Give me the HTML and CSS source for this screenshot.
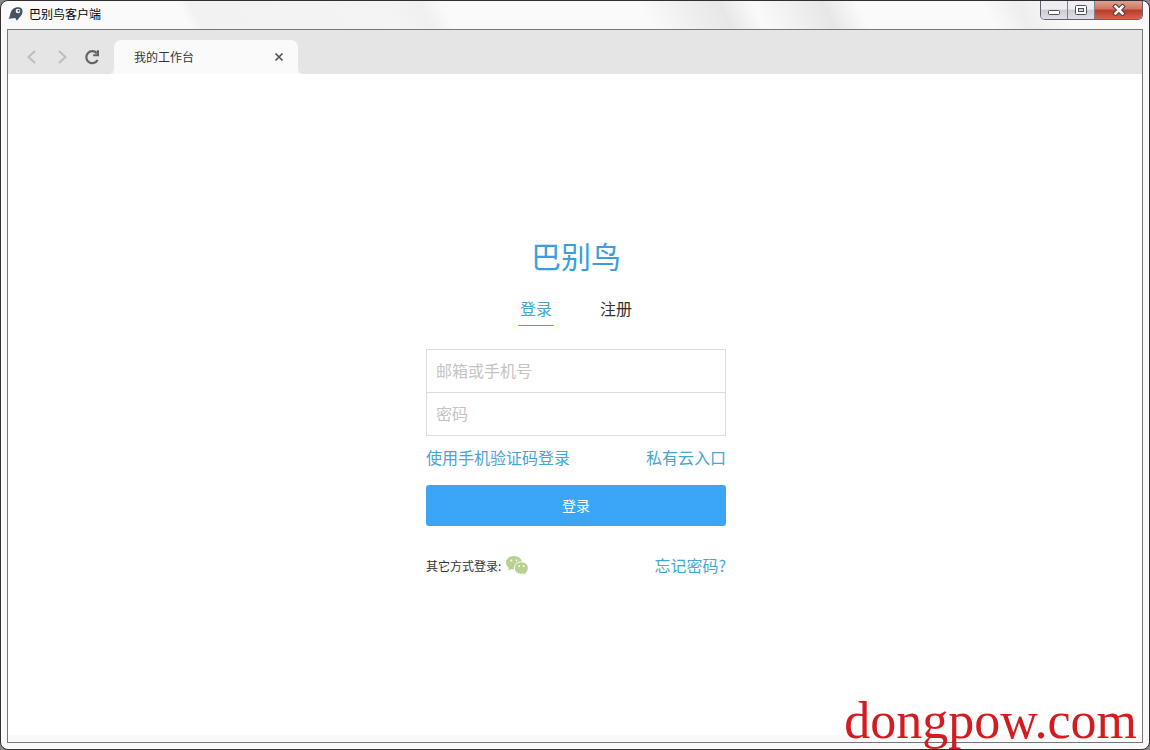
FILE: index.html
```html
<!DOCTYPE html>
<html lang="zh-CN">
<head>
<meta charset="utf-8">
<title>巴别鸟客户端</title>
<link rel="stylesheet" href="styles.css">
</head>
<body>
<div class="window">
  <header class="titlebar">
    <svg class="app-icon" width="16" height="16" viewBox="0 0 16 16" aria-hidden="true">
      <path d="M0.500 12.800C2.500 10 1.800 5.500 5 3 7.500 1 12.500 0.600 14 3.200 15.200 5.500 14.300 8.200 12.500 10.300L8.800 14.800 7.300 12Z" fill="#46525f"/>
      <circle cx="10" cy="5" r="2.300" fill="#fff"/><circle cx="10.500" cy="4.800" r="1.100" fill="#46525f"/>
    </svg>
    <h1 class="window-title">巴别鸟客户端</h1>
    <div class="controls">
      <button class="control" type="button" aria-label="最小化">
        <svg width="14" height="12" viewBox="0 0 14 12"><rect x="1.500" y="6.500" width="11" height="4" rx="1" fill="#fff" stroke="#4d4f5c"/></svg>
      </button>
      <button class="control" type="button" aria-label="最大化">
        <svg width="14" height="12" viewBox="0 0 14 12"><rect x="1.500" y="1.500" width="11" height="9" rx="1" fill="#fff" stroke="#4d4f5c"/><rect x="4.500" y="4.500" width="5" height="3" fill="#d5d6de" stroke="#4d4f5c"/></svg>
      </button>
      <button class="control control-close" type="button" aria-label="关闭">
        <svg width="14" height="12" viewBox="0 0 14 12"><path d="M3.500 2.500l7 7M10.500 2.500l-7 7" stroke="#5e3b40" stroke-width="4.600" stroke-linecap="square"/><path d="M3.500 2.500l7 7M10.500 2.500l-7 7" stroke="#fff" stroke-width="2.600" stroke-linecap="square"/></svg>
      </button>
    </div>
  </header>
  <div class="frame">
    <nav class="tabbar">
      <button class="nav-button" type="button" aria-label="后退">
        <svg width="16" height="16" viewBox="0 0 16 16"><path d="M11 2L4.500 8l6.500 6" fill="none" stroke="#bdbdbd" stroke-width="2"/></svg>
      </button>
      <button class="nav-button" type="button" aria-label="前进">
        <svg width="16" height="16" viewBox="0 0 16 16"><path d="M5 2l6.500 6L5 14" fill="none" stroke="#bdbdbd" stroke-width="2"/></svg>
      </button>
      <button class="nav-button" type="button" aria-label="刷新">
        <svg width="16" height="16" viewBox="0 0 16 16"><path d="M13.600 11A6 6 0 1 1 12.800 4.200" fill="none" stroke="#636363" stroke-width="2.200"/><path d="M15 1.200v6H9.200V5.300h3.600V1.200z" fill="#636363"/></svg>
      </button>
      <div class="page-tab">
        <span class="page-tab-title">我的工作台</span>
        <button class="tab-close" type="button" aria-label="关闭标签页">
          <svg width="10" height="10" viewBox="0 0 10 10"><path d="M1.500 1.500l7 7M8.500 1.500l-7 7" stroke="#555" stroke-width="1.700"/></svg>
        </button>
      </div>
    </nav>
    <main class="page">
      <form class="login">
        <h2 class="brand">巴别鸟</h2>
        <div class="modes">
          <a class="mode mode-active" href="#login">登录</a>
          <a class="mode" href="#register">注册</a>
        </div>
        <div class="fields">
          <input class="field" type="text" placeholder="邮箱或手机号" aria-label="邮箱或手机号">
          <input class="field" type="password" placeholder="密码" aria-label="密码">
        </div>
        <div class="links">
          <a class="link" href="#code">使用手机验证码登录</a>
          <a class="link" href="#private">私有云入口</a>
        </div>
        <button class="submit" type="submit">登录</button>
        <div class="others">
          <span class="others-label">其它方式登录:</span>
          <a class="wechat" href="#wechat" aria-label="微信登录">
            <svg width="24" height="24" viewBox="0 0 24 24">
              <path d="M9 2C4.500 2 1 4.900 1 8.700c0 2.100 1.100 3.900 2.900 5.100L3 16.500l3.300-1.600c.9.300 1.800.4 2.700.4 4.500 0 8-2.900 8-6.600S13.500 2 9 2z" fill="#b6d190"/>
              <path d="M16.500 7.900c-4 0-7.100 2.700-7.100 6.100s3.100 6.200 7.100 6.200c.8 0 1.500-.1 2.200-.3l2.800 1.500-.7-2.400c1.500-1.100 2.500-2.900 2.500-4.900 0-3.500-2.900-6.200-6.800-6.200z" fill="#b6d190" stroke="#fff"/>
              <circle cx="6.300" cy="6.600" r="1.100" fill="#fff"/><circle cx="11.500" cy="6.600" r="1.100" fill="#fff"/>
              <circle cx="14.200" cy="12.100" r="1" fill="#fff"/><circle cx="18.600" cy="12.100" r="1" fill="#fff"/>
            </svg>
          </a>
          <a class="link forgot" href="#forgot">忘记密码?</a>
        </div>
      </form>
    </main>
  </div>
  <div class="watermark">dongpow.com</div>
</div>
</body>
</html>
```
FILE: styles.css
```css
* {
  box-sizing: border-box;
}

body {
  margin: 0;
  background: #8a8788;
  font-family: "Noto Sans CJK SC", sans-serif;
  color: #333;
}

button {
  margin: 0;
  padding: 0;
  border: 0;
  background: none;
  font-family: inherit;
}

a {
  text-decoration: none;
}

svg {
  display: block;
}

.window {
  position: relative;
  display: flex;
  flex-direction: column;
  min-height: 100vh;
  padding: 0 6px 6px;
  border: 1px solid #332f31;
  border-radius: 8px;
  background: #f9f9f9;
  box-shadow: inset 0 0 0 1px #fff;
}

.titlebar {
  display: flex;
  align-items: flex-start;
  height: 28px;
  background: linear-gradient(64deg, #fafafa 16%, #f2f2f2 17%, #f4f4f4 34%, #f0f0f0 37%, #fafafa 39%, #fafafa 56%, #e7e7e7 63%, #fafafa 66%, #e7e7e7 72%, #fafafa 75%, #fafafa 86%, #eee 89%, #fafafa 93%);
}

.app-icon {
  margin: 5px 5px 0 1px;
}

.window-title {
  margin: 0;
  font-size: 12px;
  font-weight: 400;
  line-height: 26px;
  color: #000;
}

.controls {
  display: flex;
  height: 19px;
  margin-left: auto;
  border: 1px solid #62636e;
  border-top: 0;
  border-radius: 0 0 5px 5px;
  overflow: hidden;
}

.control {
  display: grid;
  place-items: center;
  width: 27px;
  border-right: 1px solid #80818d;
  background: linear-gradient(#eeeef2 0 45%, #cbccd4 50%, #dfe0e7);
}

.control-close {
  width: 47px;
  border-right: 0;
  background: linear-gradient(#dfa092, #d27562 45%, #bb3927 50%, #d56551);
}

.frame {
  flex: 1;
  display: flex;
  flex-direction: column;
  border: 1px solid #777;
  background: #fff;
}

.tabbar {
  display: flex;
  align-items: flex-end;
  height: 44px;
  padding-left: 9px;
  background: #e5e5e5;
}

.nav-button {
  display: grid;
  place-items: center;
  width: 30px;
  height: 34px;
}

.page-tab {
  position: relative;
  display: flex;
  align-items: center;
  justify-content: space-between;
  width: 184px;
  height: 34px;
  margin-left: 7px;
  padding: 0 14px 0 20px;
  border-radius: 7px 7px 0 0;
  background: #fafafa;
}

.page-tab::before,
.page-tab::after {
  content: "";
  position: absolute;
  bottom: 0;
  width: 5px;
  height: 5px;
}

.page-tab::before {
  right: 100%;
  background: radial-gradient(circle at 0 0, transparent 5px, #fafafa 5px);
}

.page-tab::after {
  left: 100%;
  background: radial-gradient(circle at 100% 0, transparent 5px, #fafafa 5px);
}

.page-tab-title {
  padding-bottom: 2px;
  font-size: 12px;
}

.page {
  flex: 1;
  padding: 161px 0 40px 2px;
  background: linear-gradient(#f9f9f9, #f9f9f9) bottom / 100% 7px no-repeat;
}

.login {
  width: 300px;
  margin: 0 auto;
}

.brand {
  margin: 0 0 20px;
  font-size: 30px;
  font-weight: 400;
  line-height: 40px;
  text-align: center;
  color: #3d9edb;
}

.modes {
  display: flex;
  justify-content: center;
  gap: 44px;
  margin-bottom: 23px;
}

.mode {
  padding: 0 2px 3px;
  border-bottom: 1px solid transparent;
  font-size: 16px;
  line-height: 27px;
  color: #333;
}

.mode-active {
  border-color: #45a5d3;
  color: #45a5d3;
}

.fields {
  border: 1px solid #ddd;
}

.field {
  display: block;
  width: 100%;
  height: 42px;
  padding: 0 9px 2px;
  border: 0;
  outline: 0;
  background: #fff;
  font-family: inherit;
  font-size: 16px;
}

.field + .field {
  height: 43px;
  border-top: 1px solid #ddd;
}

.field::placeholder {
  color: #c4c4c4;
}

.links {
  display: flex;
  justify-content: space-between;
  margin: 10px 0 17px;
}

.link {
  font-size: 16px;
  line-height: 22px;
  color: #45a5d3;
}

.submit {
  display: block;
  width: 100%;
  height: 41px;
  padding-bottom: 2px;
  border-radius: 3px;
  background: #3ba6f6;
  color: #fff;
  font-size: 14px;
}

.others {
  display: flex;
  align-items: center;
  margin-top: 28px;
}

.others-label {
  padding-bottom: 2px;
  font-size: 12px;
}

.wechat {
  margin-left: 4px;
}

.forgot {
  margin-left: auto;
  padding-bottom: 2px;
}

.watermark {
  position: absolute;
  right: 12px;
  bottom: 0;
  font-family: "Liberation Serif", serif;
  font-size: 52px;
  line-height: 56px;
  color: #d31c1f;
}
```
